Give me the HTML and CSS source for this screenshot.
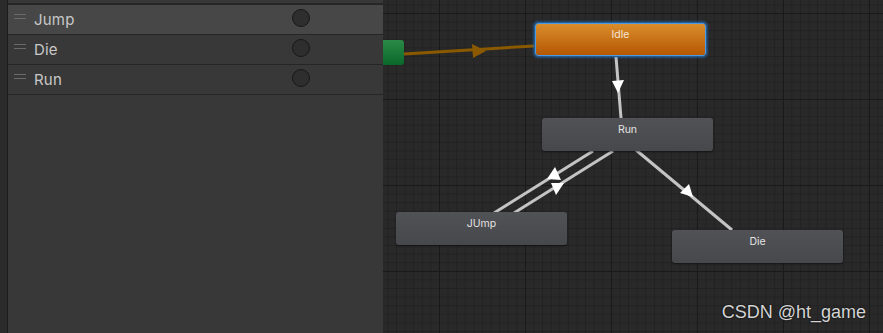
FILE: index.html
```html
<!DOCTYPE html>
<html lang="en">
<head>
    <meta charset="UTF-8">
    <title>Animator</title>
    <link rel="stylesheet" href="styles.css">
</head>
<body>
    <div class="app">
        <div class="strip"></div>
        <div class="params">
            <div class="row top"></div>
            <div class="row active">
                <span class="grip"></span>
                <span class="name">Jump</span>
                <span class="trigger"></span>
            </div>
            <div class="row">
                <span class="grip"></span>
                <span class="name">Die</span>
                <span class="trigger"></span>
            </div>
            <div class="row">
                <span class="grip"></span>
                <span class="name">Run</span>
                <span class="trigger"></span>
            </div>
        </div>

        <div class="graph">
            <svg class="edges" width="500" height="333" viewBox="383 0 500 333">
                <!-- entry -> idle -->
                <line x1="404" y1="54" x2="534" y2="46" stroke="#8a5900" stroke-width="3"/>
                <polygon points="486,51 472,44 473,58" fill="#8a5900"/>
                <!-- idle -> run -->
                <line x1="616" y1="57" x2="621" y2="118" stroke="#c4c4c4" stroke-width="3"/>
                <polygon points="618,93 612,81 624,80" fill="#ffffff"/>
                <!-- run <-> jump -->
                <line x1="593" y1="151" x2="494" y2="213" stroke="#c4c4c4" stroke-width="3"/>
                <line x1="613" y1="151" x2="514" y2="213" stroke="#c4c4c4" stroke-width="3"/>
                <polygon points="555,167 547,179 561,180" fill="#ffffff"/>
                <polygon points="556,195 551,183 564,183" fill="#ffffff"/>
                <!-- run -> die -->
                <line x1="636" y1="150" x2="732" y2="230" stroke="#c4c4c4" stroke-width="3"/>
                <polygon points="693,197 680,193 689,184" fill="#ffffff"/>
            </svg>

            <div class="entry"></div>
            <div class="state idle">Idle</div>
            <div class="state run">Run</div>
            <div class="state jump">JUmp</div>
            <div class="state die">Die</div>

            <div class="mark">CSDN @ht_game</div>
        </div>
    </div>
</body>
</html>
```

FILE: styles.css
```css
html, body{
    margin: 0;
    height: 100%;
    background: #282828;
    overflow: hidden;
}
.app{
    display: flex;
    height: 333px;
    font-family: Inter, "Liberation Sans", sans-serif;
}
.strip{
    width: 7px;
    background: #2b2b2b;
    border-right: 1px solid #1c1c1c;
}
.params{
    width: 375px;
    background: #383838;
}
.row{
    display: flex;
    align-items: center;
    height: 29px;
    border-bottom: 1px solid #262626;
}
.row.top{
    height: 3px;
    border-bottom-width: 2px;
}
.row.active{
    background: #474747;
}
.grip{
    width: 12px;
    height: 3px;
    margin: 0 8px 0 6px;
    border-top: 1px solid #6a6a6a;
    border-bottom: 1px solid #6a6a6a;
    position: relative;
    top: -3px;
}
.name{
    flex: 1;
    color: #c8c8c8;
    font-size: 15px;
    letter-spacing: 0.2px;
}
.trigger{
    width: 16px;
    height: 16px;
    margin-right: 73px;
    border-radius: 50%;
    background: #2e2e2e;
    border: 1px solid #181818;
    position: relative;
    top: -2px;
}
.graph{
    position: relative;
    flex: 1;
    background-color: #292929;
    background-image:
        linear-gradient(90deg, #1a1a1a 1px, transparent 1px),
        linear-gradient(#1a1a1a 1px, transparent 1px),
        linear-gradient(90deg, #222222 1px, transparent 1px),
        linear-gradient(#222222 1px, transparent 1px);
    background-size: 86px 86px, 86px 86px, 8.6px 8.6px, 8.6px 8.6px;
    background-position: 56px 13px, 56px 13px, 56px 13px, 56px 13px;
}
.edges{
    position: absolute;
    left: 0;
    top: 0;
}
.entry{
    position: absolute;
    left: 0;
    top: 40px;
    width: 21px;
    height: 25px;
    border-radius: 0 3px 3px 0;
    background: linear-gradient(#2c8a47, #09682a);
}
.state{
    position: absolute;
    width: 171px;
    height: 33px;
    box-sizing: border-box;
    padding-top: 5px;
    border-radius: 3px;
    background: linear-gradient(#515256, #47484b);
    box-shadow: 0 1px 2px rgba(0,0,0,0.5);
    color: #e2e2e2;
    font-size: 10.5px;
    text-align: center;
}
.idle{
    left: 152px;
    top: 23px;
    background: linear-gradient(#d98d2c, #b65703);
    border: 1px solid #4a9be4;
    box-shadow: 0 0 3px 1px #2a78c8;
    color: #f4e6d6;
    padding-top: 4px;
}
.run{
    left: 159px;
    top: 118px;
}
.jump{
    left: 13px;
    top: 212px;
}
.die{
    left: 289px;
    top: 230px;
}
.mark{
    position: absolute;
    right: 17px;
    bottom: 10px;
    color: #d4d4d4;
    font-family: "Liberation Sans", sans-serif;
    font-size: 18px;
    text-shadow: 0 0 2px #000;
}
```
